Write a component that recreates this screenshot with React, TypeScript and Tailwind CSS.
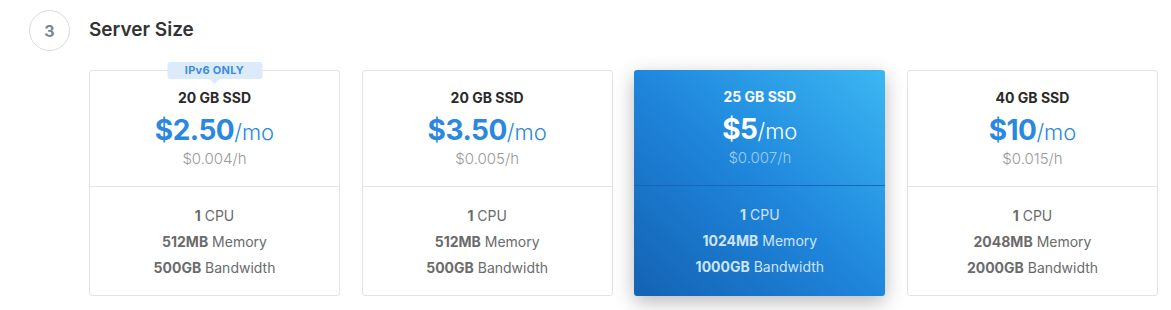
import React from "react";

type Plan = {
  disk: string;
  price: string;
  hourly: string;
  cpu: string;
  memory: string;
  bandwidth: string;
  badge?: string;
  active?: boolean;
};

const PLANS: Plan[] = [
  { disk: "20 GB SSD", price: "$2.50", hourly: "$0.004/h", cpu: "1", memory: "512MB", bandwidth: "500GB", badge: "IPv6 ONLY" },
  { disk: "20 GB SSD", price: "$3.50", hourly: "$0.005/h", cpu: "1", memory: "512MB", bandwidth: "500GB" },
  { disk: "25 GB SSD", price: "$5", hourly: "$0.007/h", cpu: "1", memory: "1024MB", bandwidth: "1000GB", active: true },
  { disk: "40 GB SSD", price: "$10", hourly: "$0.015/h", cpu: "1", memory: "2048MB", bandwidth: "2000GB" },
];

function PlanCard({ plan }: { plan: Plan }) {
  const a = plan.active;
  return (
    <div
      className={
        "relative flex h-[226px] flex-col rounded-[3px] " +
        (a
          ? "bg-gradient-to-tr from-[#1462b3] via-[#1f86dc] to-[#3cb7f2] shadow-[0_6px_20px_rgba(0,0,0,0.28)]"
          : "border border-[#e3e3e3] bg-white")
      }
    >
      {plan.badge && (
        <div className="absolute left-1/2 top-[-9px] -translate-x-1/2">
          <div className="flex h-[17px] w-[95px] items-center justify-center rounded-[3px] bg-[#dcebfa] text-[11px] font-bold tracking-[0.3px] text-[#3b8de0]">
            {plan.badge}
          </div>
          <div className="mx-auto h-0 w-0 border-x-[5px] border-t-[5px] border-x-transparent border-t-[#dcebfa]" />
        </div>
      )}
      <div
        className={
          "flex h-[116px] flex-col items-center pt-[17px] " +
          (a ? "border-b border-[#1767b8]" : "border-b border-[#e6e6e6]")
        }
      >
        <div className={"text-[14px] font-bold leading-[20px] " + (a ? "text-white" : "text-[#2a2a2a]")}>
          {plan.disk}
        </div>
        <div className={"mt-[5px] flex items-baseline leading-[34px] " + (a ? "text-white" : "text-[#2b88e0]")}>
          <span className="text-[28px] font-bold tracking-[-0.5px]">{plan.price}</span>
          <span className="text-[22px] font-light">/mo</span>
        </div>
        <div className={"text-[15px] font-light leading-[20px] " + (a ? "text-[#9fcdf2]" : "text-[#999999]")}>
          {plan.hourly}
        </div>
      </div>
      <div
        className={
          "flex flex-1 flex-col items-center pt-[16px] text-[14px] leading-[26px] " +
          (a ? "text-[#cfe4f8]" : "text-[#6b6b6b]")
        }
      >
        <div>
          <span className="font-bold">{plan.cpu}</span> CPU
        </div>
        <div>
          <span className="font-bold">{plan.memory}</span> Memory
        </div>
        <div>
          <span className="font-bold">{plan.bandwidth}</span> Bandwidth
        </div>
      </div>
    </div>
  );
}

export default function App() {
  return (
    <div
      className="h-[310px] w-[1171px] bg-white pl-[29px] pt-[10px]"
      style={{ fontFamily: "Inter, Lato, sans-serif" }}
    >
      <div className="flex items-center gap-[19px]">
        <div className="flex h-[41px] w-[41px] items-center justify-center rounded-full border border-[#d6dce2] text-[16px] font-bold text-[#7c8690]">
          3
        </div>
        <h2 className="text-[19px] font-semibold text-[#333333]">Server Size</h2>
      </div>
      <div className="ml-[60px] mt-[19px] grid w-[1069px] grid-cols-4 gap-[21.67px]">
        {PLANS.map((p, i) => (
          <PlanCard key={i} plan={p} />
        ))}
      </div>
    </div>
  );
}
